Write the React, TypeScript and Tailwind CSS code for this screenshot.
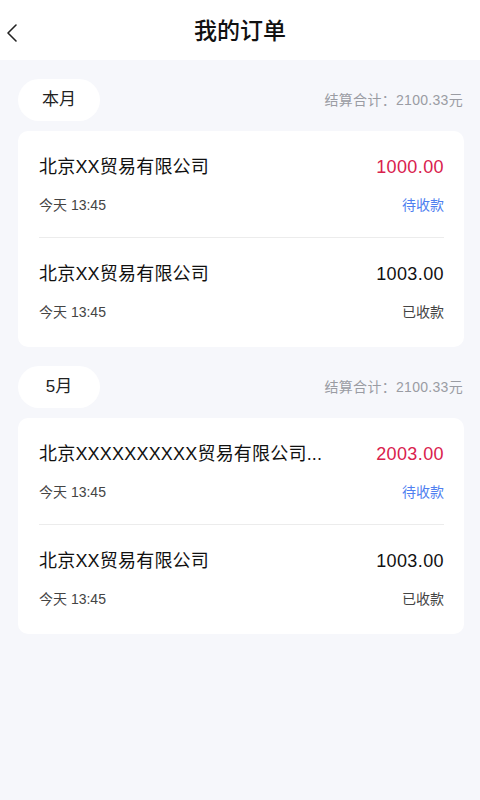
import React from "react";

type Order = { name: string; amount: string; pending: boolean; time: string };

const sections: { label: string; total: string; orders: Order[] }[] = [
  {
    label: "本月",
    total: "结算合计：2100.33元",
    orders: [
      { name: "北京XX贸易有限公司", amount: "1000.00", pending: true, time: "今天 13:45" },
      { name: "北京XX贸易有限公司", amount: "1003.00", pending: false, time: "今天 13:45" },
    ],
  },
  {
    label: "5月",
    total: "结算合计：2100.33元",
    orders: [
      { name: "北京XXXXXXXXXX贸易有限公司...", amount: "2003.00", pending: true, time: "今天 13:45" },
      { name: "北京XX贸易有限公司", amount: "1003.00", pending: false, time: "今天 13:45" },
    ],
  },
];

export default function App() {
  return (
    <div
      className="w-[480px] min-h-[800px] bg-[#f6f7fb]"
      style={{ fontFamily: '"Liberation Sans", "Noto Sans CJK SC", sans-serif' }}
    >
      <div className="relative h-[60px] bg-white flex items-center justify-center">
        <svg
          className="absolute left-[4px] top-[23px]"
          width="16"
          height="20"
          viewBox="0 0 16 20"
          fill="none"
        >
          <path d="M12 2 L4 10 L12 18" stroke="#222" strokeWidth="1.6" strokeLinecap="round" strokeLinejoin="round" />
        </svg>
        <div className="text-[23px] font-medium text-[#111] leading-none mt-[3px]">我的订单</div>
      </div>

      <div className="pl-[18px] pr-[16px] pt-[19px] pb-[20px] flex flex-col">
        {sections.map((s, i) => (
          <div key={i} className={i > 0 ? "mt-[19px]" : ""}>
            <div className="flex items-center justify-between h-[42px]">
              <div className="h-[42px] w-[82px] rounded-full bg-white flex items-center justify-center text-[17px] text-[#222]">
                {s.label}
              </div>
              <div className="text-[14px] tracking-[0.3px] text-[#9a9ca3] mr-[1px]">{s.total}</div>
            </div>
            <div className="mt-[10px] bg-white rounded-[10px] pl-[21px] pr-[20px] pb-[3px]">
              {s.orders.map((o, j) => (
                <div
                  key={j}
                  className={
                    "pt-[22px] pb-[22px] " + (j < s.orders.length - 1 ? "border-b border-[#ececec]" : "")
                  }
                >
                  <div className="flex items-center justify-between h-[28px]">
                    <div className="text-[18px] text-[#111] whitespace-nowrap tracking-[0.2px]">{o.name}</div>
                    <div
                      className={
                        "text-[18px] tracking-[0.4px] " + (o.pending ? "text-[#d9214d]" : "text-[#111]")
                      }
                    >
                      {o.amount}
                    </div>
                  </div>
                  <div className="mt-[14px] flex items-center justify-between h-[20px]">
                    <div className="text-[14px] text-[#444]">{o.time}</div>
                    <div className={"text-[14px] " + (o.pending ? "text-[#4f7ff0]" : "text-[#444]")}>
                      {o.pending ? "待收款" : "已收款"}
                    </div>
                  </div>
                </div>
              ))}
            </div>
          </div>
        ))}
      </div>
    </div>
  );
}
